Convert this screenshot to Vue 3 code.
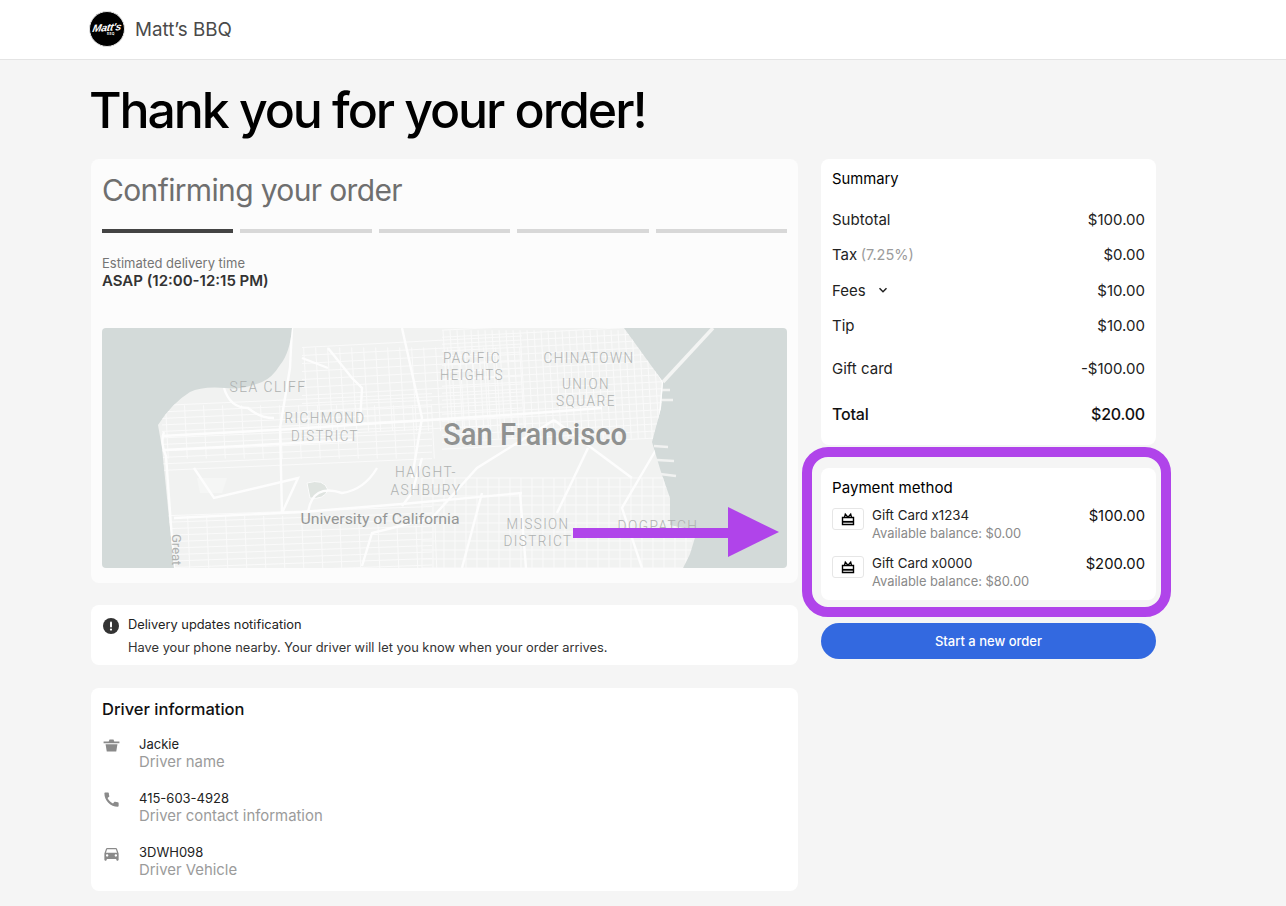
<script setup>
const rows = [
  { label: 'Subtotal', value: '$100.00' },
  { label: 'Tax', note: '(7.25%)', value: '$0.00' },
  { label: 'Fees', chevron: true, value: '$10.00' },
  { label: 'Tip', value: '$10.00' }
]
const cards = [
  { name: 'Gift Card x1234', balance: 'Available balance: $0.00', amount: '$100.00' },
  { name: 'Gift Card x0000', balance: 'Available balance: $80.00', amount: '$200.00' }
]
const drivers = [
  { value: 'Jackie', label: 'Driver name', kind: 'pot' },
  { value: '415-603-4928', label: 'Driver contact information', kind: 'phone' },
  { value: '3DWH098', label: 'Driver Vehicle', kind: 'car' }
]
const phone = 'M20.01 15.38c-1.23 0-2.42-.2-3.53-.56-.35-.12-.74-.03-1.01.24l-1.57 1.97c-2.83-1.35-5.48-3.9-6.89-6.83l1.95-1.66c.27-.28.35-.67.24-1.02-.37-1.11-.56-2.3-.56-3.53 0-.54-.45-.99-.99-.99H4.19C3.65 3 3 3.24 3 3.99 3 13.28 10.73 21 20.01 21c.71 0 .99-.63.99-1.18v-3.45c0-.54-.45-.99-.99-.99z'
const car = 'M18.92 6.01C18.72 5.42 18.16 5 17.5 5h-11c-.66 0-1.21.42-1.42 1.01L3 12v8c0 .55.45 1 1 1h1c.55 0 1-.45 1-1v-1h12v1c0 .55.45 1 1 1h1c.55 0 1-.45 1-1v-8l-2.08-5.99zM6.5 16c-.83 0-1.5-.67-1.5-1.5S5.67 13 6.5 13s1.5.67 1.5 1.5S7.33 16 6.5 16zm11 0c-.83 0-1.5-.67-1.5-1.5s.67-1.5 1.5-1.5 1.5.67 1.5 1.5-.67 1.5-1.5 1.5zM5 11l1.5-4.5h11L19 11H5z'
const land = 'M190 0Q188 25 178 37Q170 50 160 54Q140 62 124 60Q100 58 88 64Q70 75 56 97L60 120L72 240L581 240L588 226L595 203L568 197L568 170L559 144L550 114L559 80L561 54L522 0Z'

function grid(x0, y0, x1, y1, stepX, stepY, tilt) {
  const out = []
  const k = Math.tan((tilt * Math.PI) / 180)
  for (let y = y0; y <= y1; y += stepY) {
    out.push(`M${x0} ${(y + x0 * k).toFixed(1)}L${x1} ${(y + x1 * k).toFixed(1)}`)
  }
  for (let x = x0; x <= x1; x += stepX) {
    out.push(`M${(x - y0 * k).toFixed(1)} ${y0 + x0 * k}L${(x - y1 * k).toFixed(1)} ${y1 + x1 * k}`)
  }
  return out.join('')
}
const thin = [
  grid(60, 80, 330, 145, 19, 6.5, -2.5),
  grid(60, 190, 330, 260, 19, 6.5, -2),
  grid(200, 30, 420, 125, 12, 8, -3),
  grid(340, 20, 560, 140, 7, 7, -3),
  grid(320, 150, 590, 250, 11, 9, 0)
].join('')
const diag = grid(400, 100, 560, 170, 13, 13, 42) + grid(400, 70, 560, 170, 13, 13, -42)
const roads = [
  'M60 108L190 101L278 95L420 86L500 80',
  'M62 122L250 112',
  'M72 190L200 184L300 176L420 165',
  'M260 238L270 205L330 190L375 140L452 92',
  'M62 104Q58 114 64 128L72 240',
  'M122 60Q128 80 146 80Q158 90 172 90',
  'M190 0L188 40L178 100L180 185',
  'M226 20L250 50L260 60L258 95',
  'M200 30L226 40',
  'M300 0L320 90L310 150',
  'M561 54L530 0',
  'M561 54L555 120L520 180L540 240',
  'M486 120L455 185',
  'M452 92L530 150',
  'M300 178L310 165L320 130',
  'M418 165L424 240',
  'M380 165L360 240',
  'M92 140L112 170L196 150L180 185',
  'M206 185Q210 155 240 165Q262 162 275 140'
]
const piers = [
  'M558 62L568 62', 'M558 72L571 72', 'M552 118L566 119', 'M555 132L572 133', 'M558 146L574 148'
]
const labels = [
  { t: 'PACIFIC', x: 370, y: 35, w: 58 },
  { t: 'HEIGHTS', x: 370, y: 52, w: 64 },
  { t: 'CHINATOWN', x: 487, y: 35, w: 91 },
  { t: 'UNION', x: 484, y: 61, w: 48 },
  { t: 'SQUARE', x: 484, y: 78, w: 60 },
  { t: 'SEA CLIFF', x: 166, y: 64, w: 77 },
  { t: 'RICHMOND', x: 223, y: 95, w: 81 },
  { t: 'DISTRICT', x: 223, y: 113, w: 68 },
  { t: 'HAIGHT-', x: 324, y: 149, w: 62 },
  { t: 'ASHBURY', x: 324, y: 167, w: 71 },
  { t: 'MISSION', x: 436, y: 201, w: 63 },
  { t: 'DISTRICT', x: 436, y: 218, w: 69 },
  { t: 'DOGPATCH', x: 556, y: 203, w: 81 }
]
</script>

<template>
  <div class="page">
    <header class="topbar">
      <div class="brand">
        <div class="logo">
          <span class="logo-script">Matt's</span>
          <span class="logo-sub">BBQ</span>
        </div>
        <span class="brand-name">Matt’s BBQ</span>
      </div>
    </header>

    <main class="main">
      <h1 class="title">Thank you for your order!</h1>
      <div class="columns">
        <div class="col">
          <section class="card status">
            <h2 class="status-title">Confirming your order</h2>
            <div class="bars">
              <span class="bar on"></span>
              <span class="bar"></span>
              <span class="bar"></span>
              <span class="bar"></span>
              <span class="bar"></span>
            </div>
            <div class="eta-label">Estimated delivery time</div>
            <div class="eta">ASAP (12:00-12:15 PM)</div>
            <svg class="map" viewBox="0 0 685 240" width="685" height="240">
              <defs>
                <clipPath id="landclip">
                  <path :d="land" />
                </clipPath>
              </defs>
              <rect width="685" height="240" fill="#d3dad9" />
              <path :d="land" fill="#f1f2f1" />
              <path v-for="p in piers" :key="p" :d="p" stroke="#f1f2f1" stroke-width="2.500" fill="none" />
              <g clip-path="url(#landclip)" fill="none" stroke="#fafafa">
                <path :d="thin" stroke-width="1" />
                <path :d="diag" stroke-width="1" />
                <path d="M95 150L125 150L120 165L98 165Z" fill="#f5f6f5" stroke="none" />
                <path d="M205 155Q222 150 226 162Q222 172 208 170Z" fill="#dfe4e0" stroke="#fbfbfb" />
                <path v-for="(r, i) in roads" :key="i" :d="r" stroke="#fdfdfd" stroke-width="2.400" />
              </g>
              <path d="M561 54L611 0" stroke="#f3f4f3" stroke-width="3.500" fill="none" />
              <text v-for="l in labels" :key="l.t + l.x + l.y" :x="l.x" :y="l.y" :textLength="l.w" lengthAdjust="spacingAndGlyphs" text-anchor="middle" class="map-label">{{ l.t }}</text>
              <text x="433" y="117" textLength="184" lengthAdjust="spacingAndGlyphs" text-anchor="middle" class="map-city">San Francisco</text>
              <text x="278" y="196" textLength="159" lengthAdjust="spacingAndGlyphs" text-anchor="middle" class="map-uni">University of California</text>
              <text x="0" y="0" transform="translate(70 206) rotate(90)" class="map-great">Great</text>
            </svg>
          </section>

          <section class="card notice">
            <svg class="notice-icon" viewBox="0 0 16 16" width="16" height="16">
              <circle cx="8" cy="8" r="8" fill="#333" />
              <rect x="7" y="3.400" width="2" height="6" rx="1" fill="#fff" />
              <circle cx="8" cy="11.600" r="1.100" fill="#fff" />
            </svg>
            <div>
              <div class="notice-title">Delivery updates notification</div>
              <div class="notice-text">Have your phone nearby. Your driver will let you know when your order arrives.</div>
            </div>
          </section>

          <section class="card driver">
            <h3 class="driver-title">Driver information</h3>
            <div v-for="d in drivers" :key="d.value" class="driver-row">
              <svg class="driver-icon" viewBox="0 0 24 24" width="19" height="19">
                <path v-if="d.kind === 'phone'" :d="phone" fill="#8a8a8a" />
                <path v-else-if="d.kind === 'car'" :d="car" fill="#8a8a8a" />
                <path v-else d="M9.500 4.500h5l1 2.500H22v2H2V7h6.500zM4.500 10.500h15L18 19.500H6z" fill="#8a8a8a" />
              </svg>
              <div>
                <div class="driver-value">{{ d.value }}</div>
                <div class="driver-label">{{ d.label }}</div>
              </div>
            </div>
          </section>
        </div>

        <div class="col col-side">
          <section class="card summary">
            <h3 class="summary-title">Summary</h3>
            <div v-for="r in rows" :key="r.label" class="row">
              <span class="row-label">
                {{ r.label }}
                <span v-if="r.note" class="note">{{ r.note }}</span>
                <svg v-if="r.chevron" class="chev" viewBox="0 0 12 12" width="12" height="12">
                  <path d="M2.500 4.200L6 7.700L9.500 4.200" fill="none" stroke="#222" stroke-width="1.500" />
                </svg>
              </span>
              <span>{{ r.value }}</span>
            </div>
            <div class="row gift"><span>Gift card</span><span>-$100.00</span></div>
            <div class="row total"><span>Total</span><span>$20.00</span></div>
          </section>

          <section class="card payment">
            <h3 class="payment-title">Payment method</h3>
            <div v-for="c in cards" :key="c.name" class="pay-row">
              <span class="gift-box">
                <svg viewBox="0 0 14 14" width="14" height="14">
                  <path d="M1.500 5.500h11v7h-11z" fill="none" stroke="#000" stroke-width="1.400" />
                  <path d="M1.500 9.800h11" stroke="#000" stroke-width="1.800" />
                  <path d="M7 5.200L4.300 2.200L3.500 5.200M7 5.200L9.700 2.200L10.500 5.200" fill="none" stroke="#000" stroke-width="1.300" />
                </svg>
              </span>
              <div class="pay-text">
                <div class="pay-name">{{ c.name }}</div>
                <div class="pay-balance">{{ c.balance }}</div>
              </div>
              <span class="pay-amount">{{ c.amount }}</span>
            </div>
          </section>

          <button class="cta" type="button">Start a new order</button>
        </div>
      </div>
    </main>

    <div class="ring"></div>
    <svg class="arrow" viewBox="0 0 206 50" width="206" height="50">
      <rect x="0" y="21" width="156" height="10" fill="#b044ea" />
      <path d="M155 0L206 25L155 50Z" fill="#b044ea" />
    </svg>
  </div>
</template>

<style>
html, body { margin: 0; background: #f5f5f5; }
</style>

<style scoped>
.page {
  position: relative;
  width: 1286px;
  height: 906px;
  overflow: hidden;
  background: #f5f5f5;
  font-family: Inter, "Liberation Sans", sans-serif;
  color: #111;
}
.topbar {
  height: 60px;
  box-sizing: border-box;
  background: #fff;
  border-bottom: 1px solid #e4e4e4;
  display: flex;
  align-items: center;
  padding: 0 0 1px 89px;
}
.brand { display: flex; align-items: center; gap: 10px; }
.logo {
  width: 36px;
  height: 36px;
  box-sizing: border-box;
  border: 1px solid #e4e4e4;
  border-radius: 50%;
  background: #000;
  color: #fff;
  display: flex;
  flex-direction: column;
  align-items: center;
  justify-content: center;
  line-height: 1;
}
.logo-script {
  font-family: "Liberation Sans", sans-serif;
  font-style: italic;
  font-weight: 700;
  font-size: 10.500px;
  letter-spacing: -0.300px;
  transform: skewX(-14deg) rotate(-4deg);
}
.logo-sub { font-size: 3px; font-weight: 700; letter-spacing: 0.500px; margin-left: 8px; }
.brand-name { font-size: 18.800px; color: #4a4a4a; }
.main { padding-left: 91px; width: 1065px; }
.title {
  margin: 18.500px 0 0 -2px;
  font-size: 50px;
  line-height: 62px;
  font-weight: 500;
  letter-spacing: -2.080px;
  color: #000;
}
.columns {
  display: grid;
  grid-template-columns: 707px 335px;
  gap: 23px;
  margin-top: 18.500px;
}
.col { display: flex; flex-direction: column; gap: 22px; min-width: 0; }
.col-side { gap: 23px; }
.card { background: #fff; border-radius: 8px; box-sizing: border-box; }
.status { height: 424px; padding: 10px 11px; background: #fcfcfc; }
.status-title {
  margin: 0;
  font-size: 30px;
  line-height: 42px;
  font-weight: 400;
  color: #6f6f6f;
  letter-spacing: -0.650px;
}
.bars {
  display: grid;
  grid-template-columns: repeat(5, 1fr);
  gap: 7px;
  margin-top: 18px;
}
.bar { height: 4px; background: #d8d8d8; }
.bar.on { background: #444; }
.eta-label { margin-top: 22px; font-size: 13px; line-height: 17px; color: #757575; }
.eta { font-size: 15px; line-height: 18px; font-weight: 600; color: #333; }
.map { display: block; margin-top: 38px; border-radius: 4px; }
.map-label { font-family: Roboto, sans-serif; font-size: 14px; font-weight: 300; letter-spacing: 1.500px; fill: #aeb1b0; }
.map-great { font-family: Roboto, sans-serif; font-size: 13px; fill: #aeb1b0; }
.map-city { font-family: Roboto, sans-serif; font-size: 31px; font-weight: 500; fill: #8f9190; }
.map-uni { font-family: Roboto, sans-serif; font-size: 15.500px; font-weight: 400; fill: #949695; }
.notice {
  height: 60px;
  display: flex;
  gap: 9px;
  padding: 8px 12px;
  font-size: 12.850px;
  line-height: 23px;
  color: #333;
}
.notice-icon { margin-top: 5px; flex: none; }
.notice-title { color: #222; }
.driver { height: 203px; padding: 10px 11px; margin-top: 1px; }
.driver-title { margin: 0 0 7px; font-size: 16.500px; line-height: 22px; font-weight: 500; color: #111; }
.driver-row {
  display: flex;
  gap: 18px;
  height: 54px;
  padding-top: 7.500px;
  box-sizing: border-box;
}
.driver-icon { flex: none; margin-top: 1px; }
.driver-value { font-size: 13px; line-height: 18px; color: #222; }
.driver-label { font-size: 14.900px; line-height: 18.500px; color: #9b9b9b; }
.summary { height: 286px; padding: 9px 11px; }
.summary-title { margin: 0 0 12px; font-size: 14.800px; line-height: 22px; font-weight: 400; color: #000; }
.row {
  display: flex;
  justify-content: space-between;
  align-items: center;
  height: 35.300px;
  font-size: 15px;
  color: #222;
}
.row-label { display: flex; align-items: center; gap: 3.500px; }
.note { color: #9b9b9b; font-size: 14.500px; }
.chev { margin-left: 7.500px; }
.gift { height: 50px; }
.total { height: 41px; font-size: 16px; font-weight: 500; letter-spacing: -0.200px; color: #111; }
.payment { height: 132px; padding: 9px 11px; }
.payment-title { margin: 0 0 7px; font-size: 15.100px; line-height: 22px; font-weight: 400; color: #000; }
.pay-row { display: flex; height: 48px; }
.gift-box {
  width: 32px;
  height: 22px;
  box-sizing: border-box;
  border: 1px solid #e6e6e6;
  border-radius: 3px;
  display: flex;
  align-items: center;
  justify-content: center;
  margin-top: 2px;
  flex: none;
}
.pay-text { margin-left: 8px; flex: 1; }
.pay-name { font-size: 13.300px; line-height: 18px; color: #222; }
.pay-balance { font-size: 12.900px; line-height: 19px; color: #8a8a8a; }
.pay-amount { font-size: 14.800px; line-height: 21px; color: #111; }
.cta {
  height: 36px;
  border: 0;
  border-radius: 18px;
  background: #3369e0;
  color: #fff;
  font: 500 13px Inter, sans-serif;
  padding: 0;
}
.ring {
  position: absolute;
  left: 802px;
  top: 447px;
  width: 369px;
  height: 170px;
  box-sizing: border-box;
  border: 10px solid #b044ea;
  border-radius: 26px;
}
.arrow { position: absolute; left: 573px; top: 507px; }
</style>
